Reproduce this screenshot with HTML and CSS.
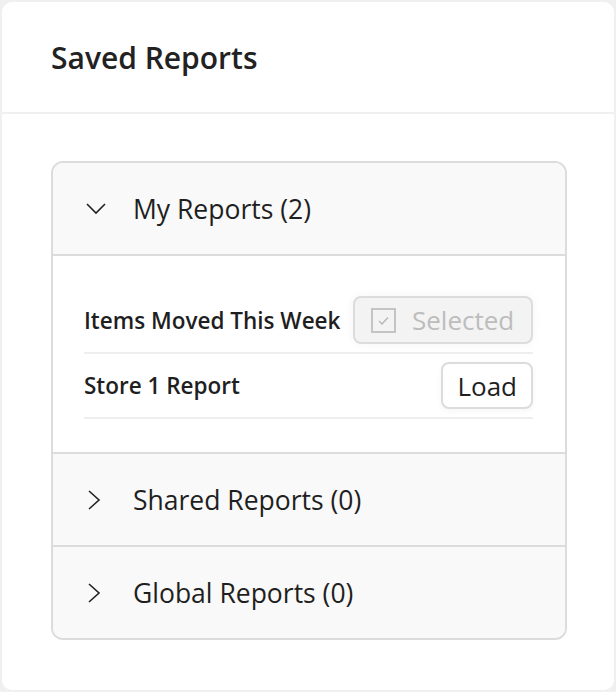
FILE: index.html
```html
<!DOCTYPE html>
<html lang="en">
<head>
    <meta charset="UTF-8">
    <meta name="viewport" content="width=device-width, initial-scale=1.0">
    <title>Saved Reports</title>
    <link rel="stylesheet" href="styles.css">
</head>
<body>
    <div class="card">
        <div class="card-header">
            <h1>Saved Reports</h1>
        </div>

        <div class="card-body">
            <div class="accordion">
                <div class="acc-item">
                    <div class="acc-header">
                        <svg class="chevron" width="20" height="20" viewBox="0 0 20 20">
                            <path d="M1 5 L10 14 L19 5" fill="none" stroke="#222" stroke-width="1.6"/>
                        </svg>
                        <span>My Reports (2)</span>
                    </div>
                    <div class="acc-content">
                        <div class="report-row">
                            <span class="report-name">Items Moved This Week</span>
                            <button class="btn btn-selected" disabled>
                                <svg width="25" height="25" viewBox="0 0 25 25">
                                    <rect x="1" y="1" width="23" height="23" fill="none" stroke="#c4c4c4" stroke-width="2"/>
                                    <path d="M8 13 L11 16 L17 9.5" fill="none" stroke="#b5b5b5" stroke-width="1.3"/>
                                </svg>
                                Selected
                            </button>
                        </div>
                        <div class="report-row">
                            <span class="report-name">Store 1 Report</span>
                            <button class="btn">Load</button>
                        </div>
                    </div>
                </div>

                <div class="acc-item">
                    <div class="acc-header">
                        <svg class="chevron" width="20" height="20" viewBox="0 0 20 20">
                            <path d="M3 1 L13 10 L3 19" fill="none" stroke="#222" stroke-width="1.6"/>
                        </svg>
                        <span>Shared Reports (0)</span>
                    </div>
                </div>

                <div class="acc-item">
                    <div class="acc-header">
                        <svg class="chevron" width="20" height="20" viewBox="0 0 20 20">
                            <path d="M3 1 L13 10 L3 19" fill="none" stroke="#222" stroke-width="1.6"/>
                        </svg>
                        <span>Global Reports (0)</span>
                    </div>
                </div>
            </div>
        </div>
    </div>
</body>
</html>
```

FILE: styles.css
```css
body {
    font-family: 'Open Sans', 'Noto Sans', sans-serif;
    background-color: #f0f0f0;
    margin: 0;
    padding: 2px;
    color: #1f1f1f;
}

.card {
    background: white;
    border-radius: 10px;
    height: 688px;
    display: flex;
    flex-direction: column;
}

.card-header {
    height: 110px;
    padding-left: 49px;
    display: flex;
    align-items: center;
    border-bottom: 2px solid #f0f0f0;
}

h1 {
    margin: 0;
    font-size: 30px;
    font-weight: 600;
    color: #222;
}

.card-body {
    padding: 47px 47px 48px 49px;
}

.accordion {
    border: 2px solid #dcdcdc;
    border-radius: 12px;
    overflow: hidden;
}

.acc-item + .acc-item {
    border-top: 2px solid #dcdcdc;
}

.acc-header {
    height: 91px;
    background-color: #f9f9f9;
    display: flex;
    align-items: center;
    padding-left: 33px;
    font-size: 26.5px;
}

.chevron {
    margin-right: 27px;
}

.acc-content {
    background: white;
    border-top: 2px solid #dcdcdc;
    padding: 32px 32px 33px 31px;
}

.report-row {
    display: flex;
    align-items: center;
    justify-content: space-between;
    padding: 8px 0;
    border-bottom: 2px solid #eeeeee;
}

.report-name {
    font-size: 22.5px;
    font-weight: 600;
}

.btn {
    font-family: inherit;
    font-size: 26px;
    height: 47px;
    padding: 0 14px;
    border: 2px solid #dcdcdc;
    border-radius: 8px;
    background: white;
    color: #1f1f1f;
    display: flex;
    align-items: center;
    box-shadow: 0 2px 6px rgba(0, 0, 0, 0.04);
}

.btn-selected {
    width: 180px;
    height: 48px;
    padding: 0 16px;
    gap: 16px;
    background-color: #f3f3f3;
    color: #bdbdbd;
    box-shadow: 0 0 10px rgba(0, 0, 0, 0.05);
}
```
